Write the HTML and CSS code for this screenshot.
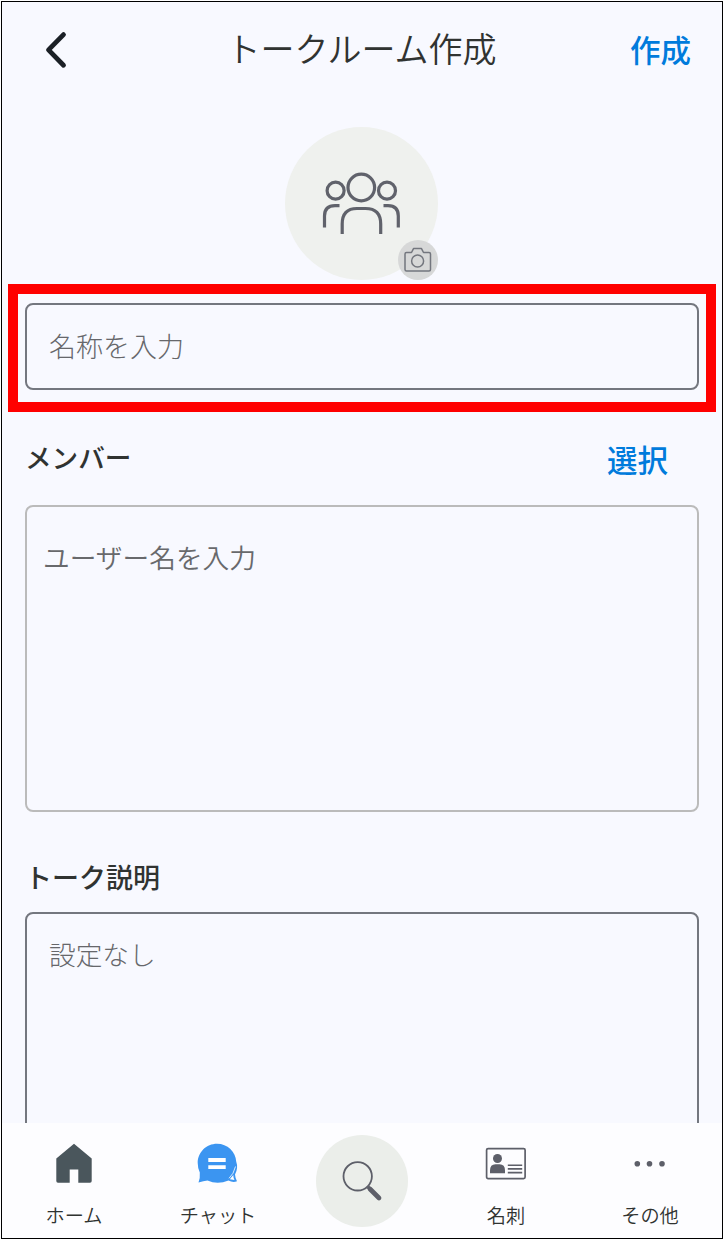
FILE: index.html
```html
<!DOCTYPE html>
<html lang="ja">
<head>
<meta charset="utf-8">
<title>トークルーム作成</title>
<link rel="stylesheet" href="styles.css">
</head>
<body>
<div class="screen">
  <header class="header">
    <svg class="back" width="28" height="40" viewBox="0 0 28 40"><path d="M22.500 4.600 7.500 19.900 22.500 35.200" fill="none" stroke="#1b2026" stroke-width="4.800" stroke-linecap="round" stroke-linejoin="round"/></svg>
    <h1 class="title">トークルーム作成</h1>
    <a class="link create">作成</a>
  </header>
  <main class="content">
    <div class="avatar">
      <svg class="people" width="80" height="66" viewBox="0 0 80 66" fill="none" stroke="#60626b" stroke-width="3.200">
        <circle cx="40.300" cy="17.500" r="13.300"/>
        <circle cx="14.600" cy="20.700" r="8.500"/>
        <circle cx="66" cy="20.700" r="8.500"/>
        <path d="M21.200 64V54Q21.200 38.500 36 38.500H44.500Q59.700 38.500 59.700 54V64"/>
        <path d="M18.500 35.600H14Q3.500 35.600 3.500 46V57.500"/>
        <path d="M62.500 35.600H67Q77.300 35.600 77.300 46V57.500"/>
      </svg>
      <span class="camera">
        <svg width="28" height="26" viewBox="0 0 28 26" fill="none" stroke="#73767e" stroke-width="1.500">
          <path d="M2.500 5.500H7.500L9.500 1.600H17.500L19.500 5.500H25Q26.500 5.500 26.500 7V22.500Q26.500 24 25 24H2.500Q1 24 1 22.500V7Q1 5.500 2.500 5.500Z" stroke-linejoin="round"/>
          <circle cx="13.600" cy="14" r="6"/>
        </svg>
      </span>
    </div>
    <div class="highlight">
      <div class="field name">名称を入力</div>
    </div>
    <div class="row">
      <h2 class="label member-label">メンバー</h2>
      <a class="link">選択</a>
    </div>
    <div class="field members">ユーザー名を入力</div>
    <h2 class="label about">トーク説明</h2>
    <div class="field description">設定なし</div>
  </main>
  <nav class="nav">
    <div class="item">
      <svg class="icon" width="42" height="42" viewBox="0 0 42 42"><path d="M21 .8 38.700 15.500V38Q38.700 39.700 37 39.700H25.300V26.500H16.700V39.700H5Q3.300 39.700 3.300 38V15.500Z" fill="#4a565c"/></svg>
      <span class="caption">ホーム</span>
    </div>
    <div class="item">
      <svg class="icon" width="42" height="42" viewBox="0 0 42 42">
        <path d="M20 .8C30.500.8 38.800 9 39.200 18.500Q41.500 25 38 31.500Q38.200 35 40 38.200Q36 40 31.500 37.500Q20.500 42 10.500 37.500Q6.500 38.200 1.500 39.400Q3.300 35 2.800 29.500Q.7 25 .7 20C.7 9.200 9.400.8 20 .8Z" fill="#3b95f1"/>
        <path d="M11.300 15H28.700V19H11.300ZM11.300 22.200H28.700V26H11.300Z" fill="#fff"/>
        <path d="M38.500 23.500Q36.800 31 32 35.300" fill="none" stroke="#fff" stroke-width=".8"/>
        <path d="m36.300 32-3.500 4.200 4.700.8Q36.200 34.500 36.300 32Z" fill="#fff"/>
      </svg>
      <span class="caption">チャット</span>
    </div>
    <div class="item search">
      <svg width="92" height="92" viewBox="0 0 92 92"><circle cx="46" cy="46" r="46" fill="#ebeeea"/><circle cx="41.700" cy="41.300" r="14.200" fill="none" stroke="#5d5f69" stroke-width="1.800"/><path d="m51.800 51.800 3.200 3.200" stroke="#5d5f69" stroke-width="3.500"/><path d="m54 54 9 9" stroke="#5d5f69" stroke-width="4.700" stroke-linecap="round"/></svg>
    </div>
    <div class="item">
      <svg class="icon" width="42" height="42" viewBox="0 0 42 42" fill="#5d5f69"><rect x="1.600" y="5.600" width="38.500" height="30" rx="1.500" fill="none" stroke="#5d5f69" stroke-width="1.700"/><circle cx="12.500" cy="15.500" r="4.500"/><path d="M5 30.300V27.500Q5 21.300 10.500 21.300H14.500Q20 21.300 20 27.500V30.300Z"/><path d="M22.800 22.200H37.200M22.800 25.900H37.200M22.800 29.600H37.200" stroke="#5d5f69" stroke-width="1.600"/></svg>
      <span class="caption">名刺</span>
    </div>
    <div class="item">
      <svg class="icon" width="42" height="42" viewBox="0 0 42 42" fill="#5d5f69"><circle cx="8.300" cy="20.700" r="2.800"/><circle cx="20.500" cy="20.700" r="2.800"/><circle cx="33" cy="20.700" r="2.800"/></svg>
      <span class="caption">その他</span>
    </div>
  </nav>
</div>
</body>
</html>
```
FILE: styles.css
```css
* { box-sizing: border-box; }

body {
  margin: 0;
  background: #fff;
  color: #303331;
  font-family: "Noto Sans CJK JP", sans-serif;
}

.screen {
  width: 722px;
  height: 1238px;
  margin: 1px 0 0 1px;
  border: 1px solid #000;
  background: #f8f9ff;
  display: flex;
  flex-direction: column;
  overflow: hidden;
}

.header {
  flex: none;
  height: 125px;
  padding: 0 31px 0 39px;
  display: grid;
  grid-template-columns: 1fr auto 1fr;
  align-items: start;
}

.back { margin-top: 28px; }

.title {
  margin: 22px 9px 0 0;
  font-size: 34px;
  line-height: 48px;
  font-weight: 350;
}

.link {
  color: #007bdc;
  font-size: 30.5px;
  line-height: 44px;
  font-weight: 500;
}

.create {
  margin-top: 25px;
  text-align: right;
}

.content {
  flex: 1;
  min-height: 0;
  overflow: hidden;
}

.avatar {
  position: relative;
  width: 153px;
  height: 153px;
  margin: 0 0 4px 283px;
  border-radius: 50%;
  background: #eff1ee;
}

.people {
  display: block;
  margin-left: 36px;
  transform: translateY(43px);
}

.camera {
  position: absolute;
  right: 0;
  bottom: 0;
  width: 40px;
  height: 40px;
  display: grid;
  place-items: center;
  border-radius: 50%;
  background: #d7d8d8;
}

.highlight {
  height: 128px;
  margin: 0 6px;
  padding: 9px 7px;
  border: 10px solid #f00;
}

.field {
  border: 2px solid #74777f;
  border-radius: 8px;
  color: #747579;
  font-size: 26.7px;
  line-height: 40px;
  font-weight: 350;
}

.name {
  height: 87px;
  padding: 21px 22px;
  font-size: 27px;
}

.row {
  height: 93px;
  padding: 25px 54px 0 23px;
  display: flex;
  justify-content: space-between;
}

.label {
  margin: 0;
  font-size: 27px;
  line-height: 40px;
  font-weight: 500;
}

.member-label { font-size: 26.6px; }

.members {
  height: 307px;
  margin: 0 23px;
  padding: 30px 16px;
  border-color: #bbb;
  color: #68696c;
}

.about {
  height: 100px;
  padding: 45px 23px 0;
}

.description {
  height: 307px;
  margin: 0 23px;
  padding: 20px 22px;
}

.name, .description {
  font-weight: 300;
  color: #66676b;
}

.nav {
  flex: none;
  height: 115px;
  display: grid;
  grid-template-columns: repeat(5, 1fr);
  background: #fdfdff;
}

.item {
  display: flex;
  flex-direction: column;
  align-items: center;
  padding-top: 20px;
}

.search { padding-top: 12px; }

.icon { flex: none; }

.caption {
  margin-top: 16px;
  font-size: 19.2px;
  line-height: 28px;
  font-weight: 350;
}
```
